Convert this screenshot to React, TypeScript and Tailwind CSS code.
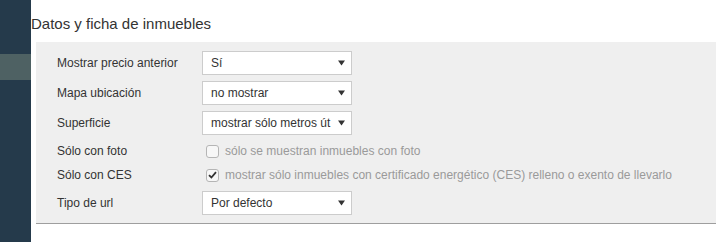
import { ReactNode } from 'react';

function Arrow() {
  return (
    <svg width="7" height="6" viewBox="0 0 7 6" className="shrink-0">
      <path d="M0 0.5 H7 L3.5 5.5 Z" fill="#333" />
    </svg>
  );
}

function Select({ value }: { value: string }) {
  return (
    <div className="flex h-[24px] w-[150px] items-center border border-[#cccccc] bg-white pl-[8px] pr-[6px]">
      <span className="mr-[4px] flex-1 overflow-hidden whitespace-nowrap text-[12px] text-[#333]">{value}</span>
      <Arrow />
    </div>
  );
}

function Check({ checked, label }: { checked?: boolean; label: string }) {
  return (
    <div className="flex items-center pl-[4px]">
      <div className="flex h-[13px] w-[13px] items-center justify-center rounded-[3px] border border-[#b5b5b5] bg-[#f7f7f7]">
        {checked && (
          <svg width="9" height="8" viewBox="0 0 9 8">
            <path d="M1 4.2 L3.4 6.5 L8 1.2" stroke="#333" strokeWidth="1.8" fill="none" />
          </svg>
        )}
      </div>
      <span className="ml-[6px] whitespace-nowrap text-[12px] text-[#9a9a9a]">{label}</span>
    </div>
  );
}

function Row({ label, children, className = '' }: { label: string; children: ReactNode; className?: string }) {
  return (
    <div className={`flex items-center ${className}`}>
      <div className="w-[145px] shrink-0 text-[12px] text-[#333]">{label}</div>
      {children}
    </div>
  );
}

export default function App() {
  return (
    <div className="flex h-[242px] w-[717px] bg-white font-['Liberation_Sans',Arial,sans-serif]">
      <aside className="w-[31px] shrink-0 bg-[#253a4b] pt-[54px]">
        <div className="h-[26px] bg-[#4e6163]" />
      </aside>
      <main className="flex-1">
        <h2 className="h-[42px] pt-[15px] text-[15px] leading-[18px] text-[#333]">Datos y ficha de inmuebles</h2>
        <section className="ml-[5px] mr-[1px] border-b border-[#9e9e9e] bg-[#efefef] pb-[8px] pl-[21px] pt-[9px]">
          <Row label="Mostrar precio anterior" className="mb-[6px]">
            <Select value="Sí" />
          </Row>
          <Row label="Mapa ubicación" className="mb-[6px]">
            <Select value="no mostrar" />
          </Row>
          <Row label="Superficie" className="mb-[4px]">
            <Select value="mostrar sólo metros út" />
          </Row>
          <Row label="Sólo con foto" className="h-[24px]">
            <Check label="sólo se muestran inmuebles con foto" />
          </Row>
          <Row label="Sólo con CES" className="mb-[4px] h-[24px]">
            <Check checked label="mostrar sólo inmuebles con certificado energético (CES) relleno o exento de llevarlo" />
          </Row>
          <Row label="Tipo de url">
            <Select value="Por defecto" />
          </Row>
        </section>
      </main>
    </div>
  );
}
